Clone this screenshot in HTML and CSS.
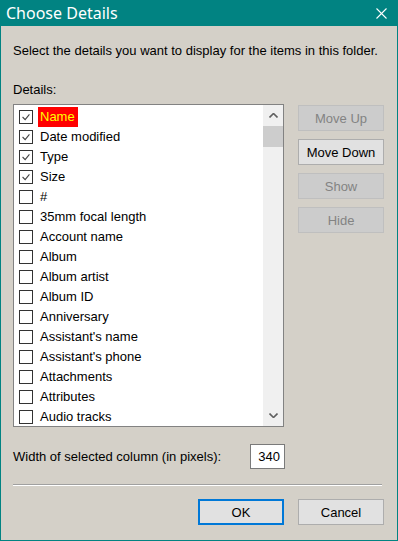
FILE: index.html
```html
<!DOCTYPE html>
<html lang="en">
<head>
  <meta charset="UTF-8">
  <title>Choose Details</title>
  <link rel="stylesheet" href="styles.css">
</head>
<body>
  <div class="window">
    <div class="titlebar">
      <span class="title">Choose Details</span>
      <!-- close glyph -->
      <svg class="close" viewBox="0 0 11 11" stroke="currentColor" stroke-width="1.1">
        <line x1="0.5" y1="0.5" x2="10.5" y2="10.5"></line>
        <line x1="10.5" y1="0.5" x2="0.5" y2="10.5"></line>
      </svg>
    </div>

    <div class="content">
      <p class="intro">Select the details you want to display for the items in this folder.</p>
      <p class="label">Details:</p>

      <div class="main">
        <div class="listbox">
          <ul class="items">
            <li class="item checked selected"><span class="box"><svg viewBox="0 0 14 14"><polyline points="3,7 6,10 11,4"></polyline></svg></span><span class="text">Name</span></li>
            <li class="item checked"><span class="box"><svg viewBox="0 0 14 14"><polyline points="3,7 6,10 11,4"></polyline></svg></span><span class="text">Date modified</span></li>
            <li class="item checked"><span class="box"><svg viewBox="0 0 14 14"><polyline points="3,7 6,10 11,4"></polyline></svg></span><span class="text">Type</span></li>
            <li class="item checked"><span class="box"><svg viewBox="0 0 14 14"><polyline points="3,7 6,10 11,4"></polyline></svg></span><span class="text">Size</span></li>
            <li class="item"><span class="box"></span><span class="text">#</span></li>
            <li class="item"><span class="box"></span><span class="text">35mm focal length</span></li>
            <li class="item"><span class="box"></span><span class="text">Account name</span></li>
            <li class="item"><span class="box"></span><span class="text">Album</span></li>
            <li class="item"><span class="box"></span><span class="text">Album artist</span></li>
            <li class="item"><span class="box"></span><span class="text">Album ID</span></li>
            <li class="item"><span class="box"></span><span class="text">Anniversary</span></li>
            <li class="item"><span class="box"></span><span class="text">Assistant's name</span></li>
            <li class="item"><span class="box"></span><span class="text">Assistant's phone</span></li>
            <li class="item"><span class="box"></span><span class="text">Attachments</span></li>
            <li class="item"><span class="box"></span><span class="text">Attributes</span></li>
            <li class="item"><span class="box"></span><span class="text">Audio tracks</span></li>
          </ul>
          <div class="scrollbar">
            <div class="arrow">
              <svg viewBox="0 0 9 5"><polyline points="0.5,4.5 4.5,0.5 8.5,4.5"></polyline></svg>
            </div>
            <div class="thumb"></div>
            <div class="track"></div>
            <div class="arrow">
              <svg viewBox="0 0 9 5"><polyline points="0.5,0.5 4.5,4.5 8.5,0.5"></polyline></svg>
            </div>
          </div>
        </div>

        <div class="side-buttons">
          <button class="btn" disabled>Move Up</button>
          <button class="btn">Move Down</button>
          <button class="btn" disabled>Show</button>
          <button class="btn" disabled>Hide</button>
        </div>
      </div>

      <div class="width-row">
        <span>Width of selected column (in pixels):</span>
        <span class="input">340</span>
      </div>

      <hr class="separator">

      <div class="footer">
        <button class="btn default">OK</button>
        <button class="btn">Cancel</button>
      </div>
    </div>
  </div>
</body>
</html>
```

FILE: styles.css
```css
*, *::before, *::after {
  margin: 0;
  padding: 0;
  box-sizing: border-box;
}

body {
  font-family: "Liberation Sans", Arial, sans-serif;
  font-size: 13px;
  color: #000;
  background: #d4d0c8;
}

.window {
  width: 398px;
  height: 541px;
  border: 1px solid #018382;
  border-top: none;
  background: #d4d0c8;
  display: flex;
  flex-direction: column;
}

.titlebar {
  height: 26px;
  background: #018382;
  color: #fff;
  display: flex;
  align-items: center;
  justify-content: space-between;
  padding: 0 10px 0 5px;
}

.title {
  font-family: "Noto Sans", "Liberation Sans", sans-serif;
  font-size: 16px;
}

.close {
  width: 11px;
  height: 11px;
}

.content {
  padding: 0 13px 0 12px;
  line-height: 15px;
}

.intro {
  margin-top: 17px;
}

.label {
  margin-top: 24px;
}

.main {
  margin-top: 7px;
  display: flex;
  gap: 14px;
}

.listbox {
  width: 271px;
  height: 323px;
  border: 1px solid #828282;
  background: #fff;
  display: flex;
}

.items {
  list-style: none;
  flex: 1;
  padding-top: 2px;
  overflow: hidden;
}

.item {
  height: 20px;
  flex-shrink: 0;
  display: flex;
  align-items: center;
  padding-left: 5px;
}

.box {
  width: 14px;
  height: 14px;
  border: 1px solid #333;
  margin-right: 5px;
  display: flex;
}

.box svg {
  width: 12px;
  height: 12px;
  fill: none;
  stroke: #444;
  stroke-width: 1.3;
}

.text {
  padding: 2px 3px 2px 2px;
  line-height: 16px;
}

.selected .text {
  background: #ff0000;
  color: #ffff00;
}

.scrollbar {
  width: 20px;
  background: #f0f0f0;
  display: flex;
  flex-direction: column;
}

.arrow {
  height: 21px;
  display: flex;
  align-items: center;
  justify-content: center;
}

.arrow svg {
  width: 9px;
  height: 5px;
  fill: none;
  stroke: #606060;
  stroke-width: 1.6;
}

.thumb {
  height: 21px;
  background: #cdcdcd;
}

.track {
  flex: 1;
}

.side-buttons {
  display: flex;
  flex-direction: column;
  gap: 8px;
  padding-top: 1px;
}

.btn {
  width: 86px;
  height: 26px;
  border: 1px solid #adadad;
  background: #e1e1e1;
  color: #000;
  font-family: "Liberation Sans", Arial, sans-serif;
  font-size: 13px;
}

.btn:disabled {
  background: #cccccc;
  border-color: #bfbfbf;
  color: #838383;
}

.btn.default {
  border: 2px solid #0078d7;
}

.width-row {
  margin-top: 17px;
  display: flex;
  align-items: center;
}

.width-row span:first-child {
  width: 237px;
}

.input {
  width: 35px;
  height: 25px;
  border: 1px solid #7a7a7a;
  background: #fff;
  display: flex;
  align-items: center;
  justify-content: flex-end;
  padding-right: 4px;
}

.separator {
  margin-top: 15px;
  width: 369px;
  border: none;
  border-top: 1px solid #a0a0a0;
  border-bottom: 1px solid #fff;
}

.footer {
  margin-top: 13px;
  display: flex;
  justify-content: flex-end;
  gap: 14px;
}
```
